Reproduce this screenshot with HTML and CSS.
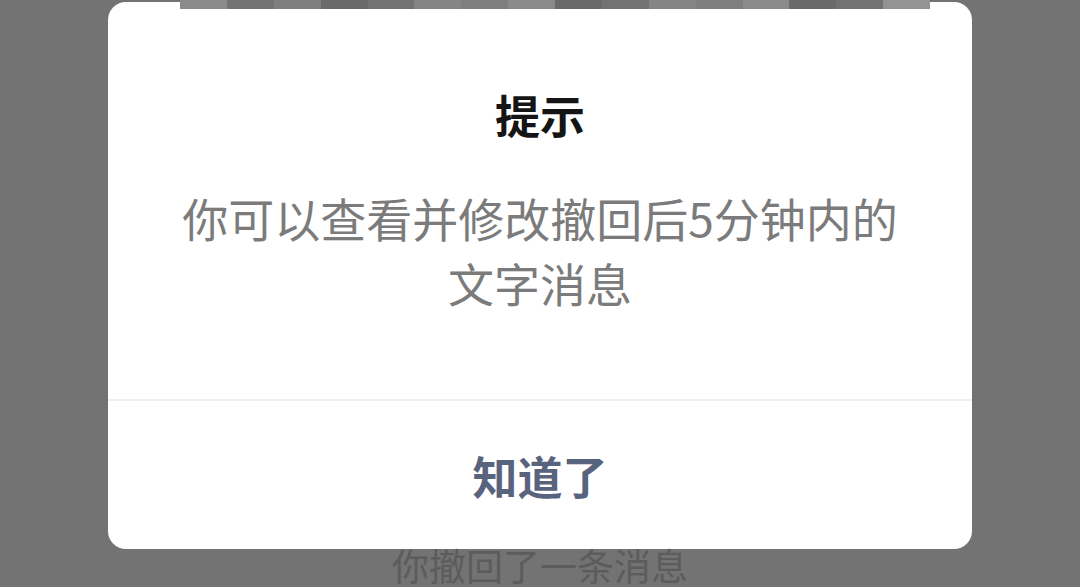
FILE: index.html
```html
<!DOCTYPE html>
<html lang="zh-CN">
<head>
    <meta charset="UTF-8">
    <meta name="viewport" content="width=device-width, initial-scale=1.0">
    <title>提示</title>
    <link rel="stylesheet" href="styles.css">
</head>
<body>
    <!-- pixelated chat strip peeking over the dialog -->
    <div class="mosaic">
        <span class="m1"></span><span class="m2"></span><span class="m3"></span><span class="m4"></span>
        <span class="m2"></span><span class="m5"></span><span class="m3"></span><span class="m1"></span>
        <span class="m4"></span><span class="m2"></span><span class="m5"></span><span class="m3"></span>
        <span class="m1"></span><span class="m4"></span><span class="m2"></span><span class="m6"></span>
    </div>

    <main class="screen">
        <div class="dialog">
            <div class="dialog-body">
                <h2 class="dialog-title">提示</h2>
                <p class="dialog-text">你可以查看并修改撤回后5分钟内的<br>文字消息</p>
            </div>
            <button class="dialog-btn">知道了</button>
        </div>
        <p class="recall-tip">你撤回了一条消息</p>
    </main>
</body>
</html>
```

FILE: styles.css
```css
body {
    margin: 0;
    padding: 0;
    background: #737373;
    font-family: "Noto Sans CJK SC", "Noto Sans", sans-serif;
    overflow: hidden;
    height: 587px;
    position: relative;
}

.mosaic {
    position: absolute;
    top: 0;
    left: 180px;
    width: 750px;
    height: 9px;
    display: flex;
    z-index: 2;
}

.mosaic span {
    flex: 1;
    height: 100%;
}

.m1 { background: #8a8a8a; }
.m2 { background: #727272; }
.m3 { background: #7e7e7e; }
.m4 { background: #6a6a6a; }
.m5 { background: #858585; }
.m6 { background: #939393; }

.screen {
    display: flex;
    flex-direction: column;
    align-items: center;
    padding-top: 2px;
}

.dialog {
    width: 864px;
    height: 547px;
    background: #ffffff;
    border-radius: 18px;
    display: flex;
    flex-direction: column;
}

.dialog-body {
    flex: 1;
    display: flex;
    flex-direction: column;
    align-items: center;
    padding-top: 83px;
    border-bottom: 2px solid #f0f0f0;
}

.dialog-title {
    margin: 0;
    font-size: 45px;
    line-height: 60px;
    font-weight: bold;
    color: #151515;
}

.dialog-text {
    margin: 40px 0 0;
    font-size: 46px;
    line-height: 65px;
    text-align: center;
    color: #7b7b7b;
}

.dialog-btn {
    height: 148px;
    border: none;
    background: transparent;
    font-family: inherit;
    font-size: 45px;
    font-weight: bold;
    color: #58637e;
    padding: 0;
    cursor: pointer;
}

.recall-tip {
    margin: 0;
    font-size: 37px;
    line-height: 32px;
    color: #5c5c5c;
}
```
